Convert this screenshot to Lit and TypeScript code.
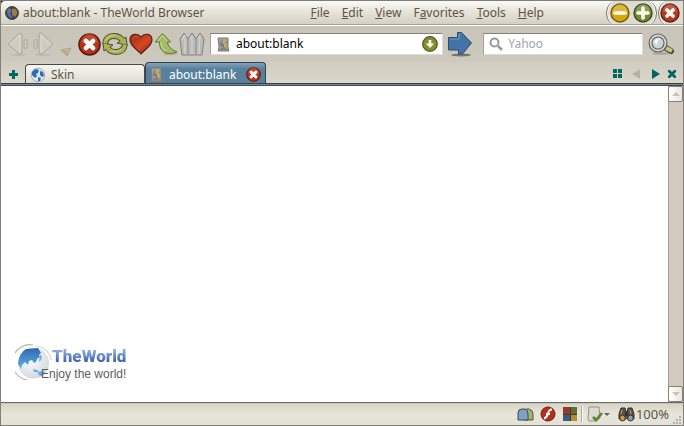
import { LitElement, html, css, svg } from "lit";
import { customElement, state } from "lit/decorators.js";

const box = (w: number, h: number, body: unknown) =>
  html`<svg width=${w} height=${h} viewBox="0 0 ${w} ${h}" aria-hidden="true">${body}</svg>`;

const appIcon = () => box(14, 14, svg`
  <circle cx="7" cy="7" r="6.5" fill="#34425a" stroke="#4a4844"/>
  <path d="M2 4l3-2 1 2-1 3-2 2zM7 2.500l4 .5 1.500 4-2.500 4-3-2z" fill="#9a7d45"/>
  <path d="M5 3l2 2-2 3 3 3-3 1-3-4z" fill="#4f74a6"/>`);

const pageIcon = () => box(13, 15, svg`
  <path d="M1 1h10v10l1 3H1l1-4z" fill="#a39d90" stroke="#7f7b73"/>
  <path d="M3 7l2-4 4 0 1 4-2 4-4-1z" fill="#6482a0"/>
  <path d="M6 2l4 1-2 3-3 1zM7 6l3 0-1 5-2-1zM3 9l3 1-2 1z" fill="#c9a860"/>
  <path d="M2 13l4-3 5 3z" fill="#858178"/>`);

const globeIcon = () => box(16, 16, svg`
  <circle cx="8" cy="8" r="6.8" fill="#dfe9f3" stroke="#a7adb3"/>
  <path d="M2 5l3-3 4 1-1 3-2 1 1 2-2 2-3-3zM10 4l3 1 1 4-2 1-2-2zM8 10l3 1-1 3-2 0z" fill="#2c6cb4"/>`);

const crossDisc = (s: number) => html`<svg width=${s} height=${s} viewBox="0 0 22 22" aria-hidden="true">
  <circle cx="11" cy="11" r="10" fill="#b8321c" stroke="#5f1e12" stroke-width="1.6"/>
  <path d="M3 9a8 8 0 0 1 16 0q-8 4-16 0z" fill="#d0573c" opacity=".6"/>
  <path d="M7.500 7.500l7 7M14.500 7.500l-7 7" stroke="#fff" stroke-width="4.200" stroke-linecap="round"/></svg>`;

const winIcon = (kind: "min" | "max" | "close") => {
  const fill = { min: "#d5a90d", max: "#6f8b35", close: "#b53a22" }[kind];
  const edge = { min: "#7a5b0a", max: "#3d4e1c", close: "#6b1f12" }[kind];
  const mark = { min: "M5 10h10", max: "M5 10h10M10 5v10", close: "M7 7l6 6M13 7l-6 6" }[kind];
  return box(20, 20, svg`
    <circle cx="10" cy="10" r="9" fill=${fill} stroke=${edge} stroke-width="1.4"/>
    <path d="M3 8a7 7 0 0 1 14 0q-7 3-14 0z" fill="#fff" opacity=".18"/>
    <path d=${mark} stroke="#fffdf0" stroke-width="3.6" stroke-linecap="round"/>`);
};

const backIcon = (flip: boolean) => box(22, 26, svg`
  <g transform=${flip ? "matrix(-1 0 0 1 22 0)" : ""} fill="#cfcbc0" stroke="#aaa69a" stroke-linejoin="round">
    <ellipse cx="12" cy="24" rx="8" ry="1.200" fill="#bfbbaf" stroke="none"/>
    <path d="M2.500 13L13 2.500q3-1.500 3 1.500v17q0 3-3 1.500L2.500 14z"/>
    <path d="M4.500 13L14 4v17" fill="none" stroke="#dfdbd2"/>
    <rect x="18" y="8.500" width="3" height="9" rx="1.500"/>
  </g>`);

const historyIcon = () => box(12, 10, svg`
  <path d="M1 3l10-2-4 8z" fill="#cbbf96" stroke="#aca384" stroke-linejoin="round"/>
  <path d="M1 3l6 6 1-5z" fill="#b9ad86"/>`);

const refreshIcon = () => box(26, 24, svg`
  <g fill="none" stroke="#4b512b" stroke-width="6"><path d="M3 12Q4 4 12 4q6 0 8 4"/><path d="M23 12q-1 8-9 8-6 0-8-4"/></g>
  <g fill="#a9b254" stroke="#4b512b" stroke-linejoin="round"><path d="M15 11l9-6 1 8z"/><path d="M11 13l-9 6-1-8z"/></g>
  <g fill="none" stroke="#a9b254" stroke-width="4"><path d="M3 11.500Q4 4 12 4q6 0 9 5"/><path d="M23 12.500q-1 7.500-9 7.500-6 0-9-5"/></g>
  <path d="M4 8q3-5 9-5M9 19q6 2 11-2" fill="none" stroke="#d2d88c"/>`);

const heartIcon = () => box(24, 22, svg`
  <defs><linearGradient id="hg" x1="0" y1="0" x2="1" y2="1">
    <stop offset="0" stop-color="#a02414"/><stop offset=".55" stop-color="#d4481f"/><stop offset="1" stop-color="#8d1c10"/>
  </linearGradient></defs>
  <path d="M12 4C9 0 1 0 1 7c0 6 7 9 11 14 4-5 11-8 11-14 0-7-8-7-11-3z" fill="url(#hg)" stroke="#4d211a" stroke-width="1.200"/>
  <path d="M3 6q2-4 6-2" fill="none" stroke="#cf6048"/>`);

const upIcon = () => box(24, 24, svg`
  <ellipse cx="16" cy="22" rx="7" ry="1.300" fill="#b3aea2"/>
  <path d="M8.500 1.500l8 8.500h-3q0 6 9.500 10-8 3-13 0-5-3-4.500-10H1z" fill="#a3bd62" stroke="#66743c" stroke-linejoin="round"/>
  <path d="M3.500 9L8.500 3.500 13 9M7 10q0 6 5 9" fill="none" stroke="#cbdc98"/>`);

const fenceIcon = () => box(26, 26, svg`
  <path d="M1 8l4-6 4 6 4-6 4 6 4-6 4 6-2 16H3z" fill="#bdbbb9" stroke="#83817e" stroke-linejoin="round"/>
  <path d="M9 8v15M17 8v15" stroke="#8b8986"/>
  <path d="M3 9l3-5v19M11 8l2-4 0 19M19 8l2-4-1 19" stroke="#d8d6d4" fill="none"/>`);

const downDisc = () => box(16, 16, svg`
  <circle cx="8" cy="8" r="7.300" fill="#82902f" stroke="#4c5720" stroke-width="1.200"/>
  <path d="M8 4v4" stroke="#fff" stroke-width="2.600"/><path d="M4 7.500h8L8 12z" fill="#fff"/>`);

const goIcon = () => box(26, 26, svg`
  <ellipse cx="14" cy="24" rx="10" ry="1.500" fill="#77736a"/>
  <path d="M1.500 6.500h9v-5h4L24.500 12l-9 11h-4v-4h-10z" fill="#4275a6" stroke="#2f4b6b" stroke-linejoin="round"/>
  <path d="M3 8h9V3h2" fill="none" stroke="#6f98bd"/>`);

const lensIcon = () => box(14, 14, svg`
  <circle cx="5.500" cy="5.500" r="4" fill="none" stroke="#999" stroke-width="2"/>
  <path d="M9 9l4 4" stroke="#999" stroke-width="2.500"/>`);

const bigLens = () => box(28, 22, svg`
  <ellipse cx="13" cy="20.500" rx="9" ry="1.300" fill="#aaa59a"/>
  <path d="M18 15l5 3" stroke="#4b4a35" stroke-width="6" stroke-linecap="round"/>
  <path d="M18 15l6 3" stroke="#cbc47d" stroke-width="4"/>
  <circle cx="10" cy="10" r="7.500" fill="#cbd6d4" stroke="#5c5c5c" stroke-width="4"/>
  <circle cx="10" cy="10" r="7.500" fill="none" stroke="#d5d5d2" stroke-width="1.800"/>
  <path d="M6 9q2-5 7-3-4 1-4 6z" fill="#f4f8f6"/>`);

const glyph = (d: string, color = "#006666", w = 10) => box(w, 10, svg`<path d=${d} fill=${color}/>`);
const PLUS = "M4 1h3v3h3v3H7v3H4V7H1V4h3z";
const GRID = "M0 0h4v4H0zM5 0h4v4H5zM0 5h4v4H0zM5 5h4v4H5z";
const LEFT = "M8 0v10L0 5z";
const RIGHT = "M1 0v10l8-5z";
const CROSS = "M2 1h2l2 2 2-2h2v2L8 5l2 2v2H8L6 7 4 9H2V7l2-2-2-2z";

const foldersIcon = () => box(17, 15, svg`
  <path d="M7 13V5q0-3 3-3h2q4 1 4 5v6z" fill="#a3b56b" stroke="#4d5839"/>
  <path d="M1 13V6q0-4 4-4h3q3 1 3 5v6z" fill="#80a1c2" stroke="#37485a"/>`);
const flashIcon = () => box(16, 16, svg`
  <circle cx="8" cy="8" r="7" fill="#b92e1b" stroke="#6c2117"/>
  <path d="M12 3.500q-3 0-4 4-1 4-4 5M6 8h4" fill="none" stroke="#fff" stroke-width="2"/>`);
const tilesIcon = () => box(15, 14, svg`
  <path d="M1 0h14v14H1z" fill="#4b352e"/>
  <path d="M1 0h7v7H1z" fill="#96382a"/><path d="M9 0h6v7H9z" fill="#5e6f34"/>
  <path d="M1 8h7v6H1z" fill="#3f5b80"/><path d="M9 8h6v6H9z" fill="#b38e32"/>`);
const checkPage = () => box(17, 17, svg`
  <path d="M2 1h10l1 11-4 3H2l-1-2z" fill="#dbdad5" stroke="#92908a"/>
  <path d="M6 11l3 3 6-7" fill="none" stroke="#58852f" stroke-width="2.600"/>`);
const binoculars = () => box(17, 15, svg`
  <path d="M3 1h4l1 5v6H1V7zM10 1h4l2 6v5H9V6z" fill="#55544c" stroke="#33322e"/>
  <path d="M7 4h3v5H7z" fill="#333"/>
  <ellipse cx="4.500" cy="11" rx="2.800" ry="3" fill="#c49a52" stroke="#3b3020"/>
  <ellipse cx="12.500" cy="11" rx="2.800" ry="3" fill="#8f9db0" stroke="#333"/>
  <path d="M4 3l-1 4M12 3l1 4" stroke="#c2a673"/>`);

const worldGlobe = () => box(40, 38, svg`
  <defs>
    <radialGradient id="wg" cx=".4" cy=".35" r=".7"><stop offset="0" stop-color="#fff"/><stop offset="1" stop-color="#d3d6d8"/></radialGradient>
    <linearGradient id="wl" x1="0" y1="0" x2="0" y2="1"><stop offset="0" stop-color="#2d69ae"/><stop offset="1" stop-color="#5fb0e8"/></linearGradient>
  </defs>
  <path d="M18 1A17.500 17.500 0 0 0 12 36" fill="none" stroke="#b5b9bd" stroke-width="1.200"/>
  <circle cx="18.500" cy="19" r="15.500" fill="url(#wg)"/>
  <path d="M3 20Q4 9 11 5l12-1 3 5-2 2 1 2-3 2-1 3-2 1-2-3-3 1-1 4-3-3-3 3-1 4-1-2z" fill="url(#wl)"/>
  <path d="M25 11l2 1-1 4-2 2zM18 25l4 1 2 2-5 0zM23 28q5-2 7 1l-3 3q-4 0-4-4z" fill="#62aee4"/>
  <path d="M21 2q13 2 15 14" fill="none" stroke="#dcdfe1" stroke-width="1.500"/>`);

const menus: [string, string, string][] = [
  ["", "F", "ile"], ["", "E", "dit"], ["", "V", "iew"],
  ["F", "a", "vorites"], ["", "T", "ools"], ["", "H", "elp"],
];

@customElement("app-root")
export class AppRoot extends LitElement {
  @state() private address = "about:blank";

  static styles = css`
    :host {
      display: flex; flex-direction: column; box-sizing: border-box; min-height: 100vh;
      border: 1px solid #807e7b; background: #111; color: #5b5447;
      font: 12px/16px "Noto Sans", sans-serif;
    }
    svg { display: block; flex: none; }
    button {
      border: 0; padding: 0; margin: 0; background: none; font: inherit; color: inherit;
      display: flex; align-items: center; flex: none;
    }
    input { border: 0; padding: 0; background: none; font: inherit; outline: 0; min-width: 0; width: 100%; flex: 1; }
    input::placeholder { color: #a3a3a3; opacity: 1; }

    .title {
      display: flex; align-items: center; height: 24px; padding-left: 4px; border-radius: 4px 4px 0 0;
      background: linear-gradient(#fbfaf6, #e8e5db 40%, #d3cfc2);
    }
    h1 { margin: 0 0 0 4px; font: inherit; flex: 1; white-space: nowrap; }
    .menu { display: flex; gap: 12px; margin-right: 62px; }
    .window { display: flex; height: 24px; }
    .pod {
      display: flex; gap: 3px; align-items: center; padding: 0 3px;
      border: solid #77746b; border-width: 0 1px; border-radius: 10px / 12px;
      box-shadow: inset 1px 0 #fff, inset -1px 0 #fff; background: #dedbd1;
    }
    .pod.last { border-right: 0; border-radius: 10px 0 0 10px / 12px 0 0 12px; padding: 0 3px 0 1px; margin-left: 1px; box-shadow: inset 1px 0 #fff; }

    .tools {
      display: flex; align-items: center; height: 37px; padding: 0 7px 0 5px; box-sizing: border-box;
      border-top: 1px solid #fff; background: linear-gradient(#c8c4b8, #cdc9be);
      box-shadow: 0 -1px #a6a296;
    }
    .nav { display: flex; align-items: center; gap: 1px; margin-right: 5px; }
    .fwd { margin-left: 4px; }
    .low { align-self: end; margin: 0 5px 0 4px; }
    .field {
      display: flex; align-items: center; box-sizing: border-box; height: 22px; background: #fff; min-width: 0;
      border: 1px solid #dedbd2; border-top-color: #85827a; border-left-color: #a5a299; color: #000;
    }
    .address { flex: 238 1 0px; gap: 6px; padding: 0 4px 0 6px; margin-right: 4px; }
    .search { flex: 160 1 0px; gap: 5px; padding: 0 4px 0 5px; margin: 0 5px 0 10px; }

    .tabs {
      display: flex; align-items: end; height: 21px; padding: 0 5px 0 7px;
      background: linear-gradient(#d0ccc0, #dad7cb); border-bottom: 1px solid #3a4248;
    }
    .tab {
      display: flex; align-items: center; box-sizing: border-box; width: 120px; height: 19px; padding: 1px 0 0 4px; gap: 5px;
      border: 1px solid #4a4946; border-bottom: 0; border-radius: 4px 4px 0 0;
      background: linear-gradient(#f7f5ef, #dedbd0);
    }
    .add { margin-right: 7px; height: 18px; }
    .tab.on {
      width: 121px; height: 21px; padding: 3px 4px 0 4px; border-color: #33414c; gap: 6px;
      background: linear-gradient(#84a2ba, #56809f 30%, #5b8099); color: #fff;
    }
    .name { flex: 1; text-align: left; }
    .side { display: flex; align-items: center; height: 19px; margin-left: auto; }
    .far { margin-left: 9px; }
    .near { margin-left: 5px; }
    .rule { height: 1px; background: #6887a0; border-bottom: 1px solid #4a4a48; }

    .body { flex: 1; display: flex; background: #fff; }
    main { flex: 1; display: flex; align-items: end; padding: 0 0 20px 14px; }
    .brand { display: flex; align-items: end; height: 38px; }
    .words { margin-left: -14px; text-align: right; }
    .big {
      font: 900 17px/20px Roboto, "Liberation Sans", sans-serif;
      color: transparent; background: linear-gradient(#8cb0e0 20%, #3f5eae 80%); background-clip: text; -webkit-background-clip: text;
    }
    .small { font: 12px/16px "Liberation Sans", Arial, sans-serif; color: #5c5c5c; }
    .scroll {
      width: 15px; box-sizing: border-box; display: flex; flex-direction: column; justify-content: space-between;
      background: #d2cabf; box-shadow: inset 1px 0 #a39b91;
    }
    .scroll button {
      height: 16px; justify-content: center; box-sizing: border-box;
      border: 1px solid #8a8078; border-radius: 2px; background: linear-gradient(90deg, #fff, #e9e5dd);
    }

    footer {
      display: flex; align-items: center; height: 22px; border-top: 1px solid #6b6963;
      box-shadow: inset 0 1px #c8c4b8; padding-right: 1px;
      background: linear-gradient(#d6d2c5, #e7e4d9 50%, #e4e1d6); justify-content: flex-end;
    }
    .sep { width: 1px; height: 16px; background: #aaa699; border-right: 1px solid #fff; margin: 0 4px; }
    .gap { margin-right: 6px; }
    .zoom { gap: 1px; margin-left: 8px; font-size: 13px; }
    .grip { align-self: end; margin-left: 3px; }
  `;

  render() {
    return html`
      <header class="title">
        ${appIcon()}
        <h1>about:blank - TheWorld Browser</h1>
        <nav class="menu">${menus.map(([a, k, b]) => html`<button><span>${a}<u>${k}</u>${b}</span></button>`)}</nav>
        <div class="window">
          <div class="pod">
            <button aria-label="Minimize">${winIcon("min")}</button>
            <button aria-label="Maximize">${winIcon("max")}</button>
          </div>
          <div class="pod last"><button aria-label="Close">${winIcon("close")}</button></div>
        </div>
      </header>
      <div class="tools">
        <div class="nav">
          <button aria-label="Back">${backIcon(false)}</button>
          <button class="fwd" aria-label="Forward">${backIcon(true)}</button>
          <button class="low" aria-label="History">${historyIcon()}</button>
          <button aria-label="Stop">${crossDisc(23)}</button>
          <button aria-label="Refresh">${refreshIcon()}</button>
          <button aria-label="Favorites">${heartIcon()}</button>
          <button aria-label="Up">${upIcon()}</button>
          <button aria-label="Home">${fenceIcon()}</button>
        </div>
        <div class="field address">
          ${pageIcon()}
          <input aria-label="Address" .value=${this.address}
            @input=${(e: Event) => (this.address = (e.target as HTMLInputElement).value)} />
          <button aria-label="Show addresses">${downDisc()}</button>
        </div>
        <button aria-label="Go">${goIcon()}</button>
        <div class="field search">
          ${lensIcon()}
          <input aria-label="Search" placeholder="Yahoo" />
        </div>
        <button aria-label="Search the web">${bigLens()}</button>
      </div>
      <div class="tabs">
        <button class="add" aria-label="New tab">${glyph(PLUS)}</button>
        <button class="tab">${globeIcon()}<span class="name">Skin</span></button>
        <div class="tab on">${pageIcon()}<span class="name">about:blank</span>
          <button aria-label="Close tab">${crossDisc(15)}</button></div>
        <div class="side">
          <button aria-label="Tab list">${glyph(GRID)}</button>
          <button class="far" aria-label="Previous tab">${glyph(LEFT, "#b5b2aa")}</button>
          <button class="far" aria-label="Next tab">${glyph(RIGHT)}</button>
          <button class="near" aria-label="Close current tab">${glyph(CROSS, "#006666", 12)}</button>
        </div>
      </div>
      <div class="rule"></div>
      <div class="body">
        <main>
          <div class="brand">
            ${worldGlobe()}
            <div class="words"><div class="big">TheWorld</div><div class="small">Enjoy the world!</div></div>
          </div>
        </main>
        <div class="scroll">
          <button aria-label="Scroll up">${box(8, 4, svg`<path d="M0 4l4-4 4 4z" fill="#c8c1b7"/>`)}</button>
          <button aria-label="Scroll down">${box(8, 4, svg`<path d="M0 0l4 4 4-4z" fill="#c8c1b7"/>`)}</button>
        </div>
      </div>
      <footer>
        <button class="gap" aria-label="Folders">${foldersIcon()}</button>
        <button class="gap" aria-label="Flash">${flashIcon()}</button>
        <button aria-label="Tiles">${tilesIcon()}</button>
        <div class="sep"></div>
        <button aria-label="Page check">${checkPage()}${box(6, 3, svg`<path d="M0 0h6L3 3z" fill="#66635b"/>`)}</button>
        <button class="zoom">${binoculars()}<span>100%</span></button>
        <span class="grip">${box(10, 10, svg`<path d="M7 1h2v2H7zM4 4h2v2H4zM7 4h2v2H7zM1 7h2v2H1zM4 7h2v2H4zM7 7h2v2H7z" fill="#b5b1a5"/>`)}</span>
      </footer>
    `;
  }
}
